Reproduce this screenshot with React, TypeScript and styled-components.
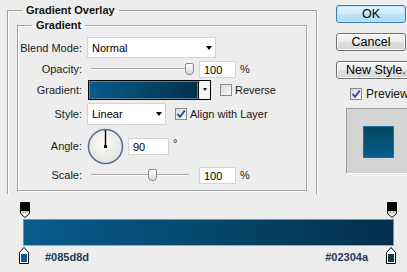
import React from "react";
import styled, { createGlobalStyle } from "styled-components";

const Global = createGlobalStyle`
  html, body { margin: 0; padding: 0; background: #ededed; overflow: hidden; }
  body { font-family: "Liberation Sans", Arial, sans-serif; font-size: 11px; color: #141414; }
`;

const Page = styled.div`
  width: 407px;
  height: 272px;
  overflow: hidden;
  background: #ededed;
`;

const Top = styled.div`
  display: flex;
  align-items: flex-start;
`;

const Outer = styled.fieldset`
  box-sizing: border-box;
  width: 310px;
  margin: 3px 0 0 7px;
  padding: 1px 9px 3px 9px;
  border: 1px solid #a0a0a0;
  border-bottom: none;
  box-shadow: 1px 0 0 #fff, inset 1px 1px 0 #fff;
  min-inline-size: 0;
`;

const Inner = styled.fieldset`
  box-sizing: border-box;
  width: 290px;
  margin: 0;
  padding: 4px 0 5px 0;
  border: 1px solid #a0a0a0;
  box-shadow: 1px 1px 0 #fff, inset 1px 1px 0 #fff;
  min-inline-size: 0;
`;

const Legend = styled.legend<{ $offset: number }>`
  margin-left: ${(p) => p.$offset}px;
  padding: 0 4px;
  font-weight: bold;
  font-size: 11px;
  line-height: 14px;
  color: #111;
`;

const Row = styled.div<{ $h: number }>`
  display: grid;
  grid-template-columns: 64px auto;
  column-gap: 5px;
  align-items: center;
  height: ${(p) => p.$h}px;
`;

const Label = styled.span`
  text-align: right;
  white-space: nowrap;
  color: #1a1a1a;
`;

const Controls = styled.div`
  display: flex;
  align-items: center;
`;

const Select = styled.div<{ $w: number; $h: number }>`
  box-sizing: border-box;
  width: ${(p) => p.$w}px;
  height: ${(p) => p.$h}px;
  background: #fff;
  border: 1px solid #d4d4d4;
  display: flex;
  align-items: center;
  justify-content: space-between;
  padding: 1px 3px 0 4px;
  color: #000;
`;

const Caret = styled.span<{ $size?: number }>`
  width: 0;
  height: 0;
  border-left: ${(p) => (p.$size ?? 7) / 2}px solid transparent;
  border-right: ${(p) => (p.$size ?? 7) / 2}px solid transparent;
  border-top: ${(p) => Math.round(((p.$size ?? 7) * 4) / 7)}px solid #000;
`;

const Slider = styled.div`
  position: relative;
  width: 98px;
  height: 14px;
  margin-left: 4px;
  &::before {
    content: "";
    position: absolute;
    left: 0;
    right: 0;
    top: 6px;
    height: 1px;
    background: #a9a9a9;
    box-shadow: 0 1px 0 #fff;
  }
`;

const Thumb = styled.span`
  position: absolute;
  top: 1px;
  width: 9px;
  height: 12px;
  box-sizing: border-box;
  border: 1px solid #8b8b8b;
  border-radius: 2px 2px 4px 4px;
  background: linear-gradient(#fbfbfb, #dcdcdc);
`;

const Field = styled.div<{ $w: number }>`
  box-sizing: border-box;
  width: ${(p) => p.$w}px;
  height: 17px;
  margin-left: ${(p) => (p.$w === 37 ? 10 : 4)}px;
  background: #fff;
  border: 1px solid #d4d4d4;
  display: flex;
  align-items: center;
  padding: 1px 0 0 4px;
  color: #000;
`;

const Unit = styled.span<{ $raise?: boolean }>`
  margin-left: 4px;
  color: #1a1a1a;
  align-self: ${(p) => (p.$raise ? "flex-start" : "center")};
  margin-top: ${(p) => (p.$raise ? "9px" : "0")};
`;

const GradientPicker = styled.div`
  box-sizing: border-box;
  margin-left: 1px;
  width: 123px;
  height: 20px;
  border: 1px solid #000;
  display: flex;
`;

const Swatch = styled.div`
  flex: 1;
  border-right: 1px solid #000;
  box-shadow: inset 0 0 0 1px #5a7f98;
  background: linear-gradient(to right, #085d8d, #02304a);
`;

const ArrowCell = styled.div`
  width: 11px;
  background: #f5f5f5;
  display: flex;
  align-items: center;
  justify-content: center;
`;

const Check = styled.span<{ $gap: number }>`
  box-sizing: border-box;
  width: 12px;
  height: 12px;
  margin-left: ${(p) => p.$gap}px;
  border: 1px solid #8a8a8a;
  background: linear-gradient(135deg, #d6d6d6, #fbfbfb);
  display: inline-flex;
  align-items: center;
  justify-content: center;
  flex: none;
`;

const CheckText = styled.span<{ $size?: number }>`
  margin-left: ${(p) => (p.$size ? 4 : 3)}px;
  font-size: ${(p) => p.$size ?? 11}px;
  color: #141414;
  white-space: nowrap;
`;

const Side = styled.div`
  display: flex;
  flex-direction: column;
  margin-left: 19px;
  padding-top: 5px;
  width: 71px;
`;

const Button = styled.div<{ $primary?: boolean; $wide?: boolean }>`
  box-sizing: border-box;
  width: ${(p) => (p.$wide ? 84 : 70)}px;
  height: 18px;
  margin-bottom: 10px;
  border: 1px solid ${(p) => (p.$primary ? "#3c7fb1" : "#707070")};
  border-radius: 3px;
  display: flex;
  align-items: center;
  justify-content: ${(p) => (p.$wide ? "flex-start" : "center")};
  padding-left: ${(p) => (p.$wide ? 9 : 0)}px;
  font-size: 12.5px;
  color: #000;
  white-space: nowrap;
  background: ${(p) =>
    p.$primary
      ? "linear-gradient(#e3f4fd, #cdeafa 50%, #bde3f8 51%, #b2ddf5)"
      : "linear-gradient(#f4f4f4, #ececec 50%, #dfdfdf 51%, #d6d6d6)"};
  box-shadow: inset 0 0 0 1px ${(p) => (p.$primary ? "#b8e2f8" : "#fcfcfc")};
`;

const PreviewRow = styled.div`
  display: flex;
  align-items: center;
  height: 12px;
  margin-top: -1px;
  padding-left: 14px;
`;

const PreviewBox = styled.div`
  box-sizing: border-box;
  margin: 8px 0 0 10px;
  width: 70px;
  height: 66px;
  border-top: 1px solid #9a9a9a;
  border-left: 1px solid #9a9a9a;
  border-bottom: 1px solid #fff;
  background: #d4d4d4;
  padding: 17px 0 0 16px;
`;

const PreviewSquare = styled.div`
  box-sizing: border-box;
  width: 31px;
  height: 32px;
  border: 1px solid #1d6e9e;
  background: linear-gradient(#02465e, #085d8d);
`;

const Editor = styled.div`
  padding-top: 8px;
`;

const StopRow = styled.div`
  display: flex;
  justify-content: space-between;
  padding: 0 10px 0 20px;
  height: 16px;
`;

const Bar = styled.div`
  box-sizing: border-box;
  margin: 1px 0 0 23px;
  width: 371px;
  height: 27px;
  border: 1px solid #8c8c8c;
  border-bottom-color: #a8a8a8;
  background: linear-gradient(to right, #085d8d, #02304a);
`;

const BottomRow = styled.div`
  display: flex;
  align-items: center;
  margin-top: 1px;
  padding: 0 11px 0 19px;
  height: 17px;
`;

const Hex = styled.span<{ $right?: boolean }>`
  font-weight: bold;
  font-size: 11px;
  color: #1f3a58;
  margin-top: 3px;
  margin-left: ${(p) => (p.$right ? "auto" : "16px")};
  margin-right: ${(p) => (p.$right ? "18px" : "0")};
`;

const CheckMark = () => (
  <svg width="10" height="10" viewBox="0 0 10 10">
    <path d="M1.5 5 L4 7.8 L8.8 1.6" fill="none" stroke="#2b4a9b" strokeWidth="1.8" />
  </svg>
);

const TopStop = () => (
  <svg width="10" height="16" viewBox="0 0 10 16">
    <path d="M0.5 0.5H9.5V11.5L5 15.5L0.5 11.5Z" fill="#fff" stroke="#000" />
    <rect x="1" y="1" width="8" height="8" fill="#000" />
    <rect x="1" y="9" width="8" height="2.5" fill="#c6c6c6" />
  </svg>
);

const BottomStop = ({ color }: { color: string }) => (
  <svg width="10" height="17" viewBox="0 0 10 17">
    <path d="M5 0.5L9.5 5.5V16.5H0.5V5.5Z" fill="#fff" stroke="#000" />
    <rect x="2" y="7" width="6" height="8" fill={color} />
  </svg>
);

const Dial = () => (
  <svg width="37" height="37" viewBox="0 0 37 37">
    <defs>
      <radialGradient id="dialFill" cx="45%" cy="40%" r="60%">
        <stop offset="0%" stopColor="#fbfbf8" />
        <stop offset="100%" stopColor="#e6e6df" />
      </radialGradient>
    </defs>
    <circle cx="18.5" cy="18.5" r="17" fill="url(#dialFill)" stroke="#5d6e98" strokeWidth="1.6" />
    <line x1="18.5" y1="18.5" x2="18.5" y2="2" stroke="#000" strokeWidth="1.4" />
    <rect x="17" y="17" width="3" height="3" fill="#000" />
  </svg>
);

const SLIDER_W = 98;
const thumbLeft = (frac: number) => Math.round(frac * SLIDER_W - 4);

export default function App() {
  return (
    <Page>
      <Global />
      <Top>
        <Outer>
          <Legend $offset={5}>Gradient Overlay</Legend>
          <Inner>
            <Legend $offset={14}>Gradient</Legend>
            <Row $h={23}>
              <Label>Blend Mode:</Label>
              <Controls>
                <Select $w={129} $h={21}>
                  Normal
                  <Caret />
                </Select>
              </Controls>
            </Row>
            <Row $h={20}>
              <Label>Opacity:</Label>
              <Controls>
                <Slider>
                  <Thumb style={{ left: thumbLeft(1) }} />
                </Slider>
                <Field $w={37}>100</Field>
                <Unit>%</Unit>
              </Controls>
            </Row>
            <Row $h={21}>
              <Label>Gradient:</Label>
              <Controls>
                <GradientPicker>
                  <Swatch />
                  <ArrowCell>
                    <Caret $size={5} />
                  </ArrowCell>
                </GradientPicker>
                <Check $gap={9} />
                <CheckText>Reverse</CheckText>
              </Controls>
            </Row>
            <Row $h={27}>
              <Label>Style:</Label>
              <Controls>
                <Select $w={79} $h={22}>
                  Linear
                  <Caret />
                </Select>
                <Check $gap={9}>
                  <CheckMark />
                </Check>
                <CheckText>Align with Layer</CheckText>
              </Controls>
            </Row>
            <Row $h={38}>
              <Label>Angle:</Label>
              <Controls>
                <Dial />
                <Field $w={41}>90</Field>
                <Unit $raise>°</Unit>
              </Controls>
            </Row>
            <Row $h={20}>
              <Label>Scale:</Label>
              <Controls>
                <Slider>
                  <Thumb style={{ left: thumbLeft(0.62) }} />
                </Slider>
                <Field $w={37}>100</Field>
                <Unit>%</Unit>
              </Controls>
            </Row>
          </Inner>
        </Outer>
        <Side>
          <Button $primary>OK</Button>
          <Button>Cancel</Button>
          <Button $wide>New Style...</Button>
          <PreviewRow>
            <Check $gap={0}>
              <CheckMark />
            </Check>
            <CheckText $size={12}>Preview</CheckText>
          </PreviewRow>
          <PreviewBox>
            <PreviewSquare />
          </PreviewBox>
        </Side>
      </Top>
      <Editor>
        <StopRow>
          <TopStop />
          <TopStop />
        </StopRow>
        <Bar />
        <BottomRow>
          <BottomStop color="#085d8d" />
          <Hex>#085d8d</Hex>
          <Hex $right>#02304a</Hex>
          <BottomStop color="#0a3a55" />
        </BottomRow>
      </Editor>
    </Page>
  );
}
